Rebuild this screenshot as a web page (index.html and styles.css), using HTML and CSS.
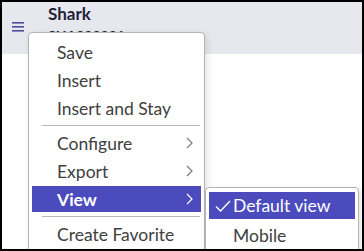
FILE: index.html
```html
<!DOCTYPE html>
<html lang="en">
<head>
    <meta charset="UTF-8">
    <title>Shark - Menu</title>
    <link rel="stylesheet" href="styles.css">
</head>
<body>
    <div class="frame">
        <div class="header">
            <svg class="burger" width="12" height="10" viewBox="0 0 12 10">
                <rect x="0" y="0" width="12" height="1.6" fill="#4d4d9e"/>
                <rect x="0" y="4" width="12" height="1.6" fill="#4d4d9e"/>
                <rect x="0" y="8" width="12" height="1.6" fill="#4d4d9e"/>
            </svg>
            <div class="title">
                <div class="name">Shark</div>
                <div class="code">SHA000001</div>
            </div>
        </div>

        <!-- context menu -->
        <div class="menu">
            <div class="item">Save</div>
            <div class="item">Insert</div>
            <div class="item">Insert and Stay</div>
            <div class="sep"></div>
            <div class="item">Configure <svg class="chev" width="7" height="12" viewBox="0 0 7 12"><polyline points="1,1 6,6 1,11" fill="none" stroke="currentColor" stroke-width="1.2"/></svg></div>
            <div class="item">Export <svg class="chev" width="7" height="12" viewBox="0 0 7 12"><polyline points="1,1 6,6 1,11" fill="none" stroke="currentColor" stroke-width="1.2"/></svg></div>
            <div class="item active">View <svg class="chev" width="7" height="12" viewBox="0 0 7 12"><polyline points="1,1 6,6 1,11" fill="none" stroke="currentColor" stroke-width="1.2"/></svg></div>
            <div class="sep"></div>
            <div class="item">Create Favorite</div>
        </div>

        <!-- sub menu for View -->
        <div class="submenu">
            <div class="sub-item active">
                <svg class="check" width="16" height="12" viewBox="0 0 16 12"><polyline points="1,6.5 5.5,11 15,1" fill="none" stroke="currentColor" stroke-width="1.4"/></svg>
                Default view
            </div>
            <div class="sub-item">Mobile</div>
        </div>
    </div>
</body>
</html>
```

FILE: styles.css
```css
body {
    margin: 0;
    font-family: Lato, "Liberation Sans", sans-serif;
    background: #fff;
}
.frame {
    position: relative;
    width: 360px;
    height: 247px;
    border: 2px solid #000;
    overflow: hidden;
    background: #fff;
}
.header {
    height: 52px;
    background: #e7e8ed;
    display: flex;
    align-items: flex-start;
}
.burger {
    margin: 20px 0 0 10px;
}
.title {
    margin: 2px 0 0 24px;
    color: #22223a;
}
.name {
    font-weight: bold;
    font-size: 17px;
    line-height: 20px;
}
.code {
    margin-top: 4px;
    font-weight: bold;
    font-size: 14px;
    line-height: 16px;
}
.menu {
    position: absolute;
    left: 26px;
    top: 30px;
    width: 175px;
    height: 240px;
    padding-top: 6px;
    display: flex;
    flex-direction: column;
    background: #fff;
    border: 1px solid #b4b4b8;
    border-radius: 4px;
    box-shadow: 2px 2px 6px rgba(0, 0, 0, 0.12);
}
.item {
    height: 26px;
    flex: none;
    margin: 0 3px 2px 3px;
    padding: 0 8px 0 25px;
    display: flex;
    align-items: center;
    justify-content: space-between;
    font-size: 17.5px;
    color: #404040;
}
.chev {
    color: #7a7a7a;
}
.item.active {
    background: #4b4bbe;
    color: #fff;
    font-weight: bold;
}
.item.active .chev {
    color: #fff;
}
.sep {
    height: 1px;
    flex: none;
    margin: 2px 4px 4px 13px;
    background: #b8b8b8;
}
.submenu {
    position: absolute;
    left: 203px;
    top: 185px;
    width: 152px;
    height: 80px;
    padding-top: 4px;
    display: flex;
    flex-direction: column;
    background: #fff;
    border: 1px solid #b4b4b8;
    border-radius: 4px;
    box-shadow: 2px 2px 6px rgba(0, 0, 0, 0.12);
}
.sub-item {
    height: 27px;
    flex: none;
    margin: 0 3px 3px 3px;
    padding-left: 24px;
    display: flex;
    align-items: center;
    font-size: 17.5px;
    color: #404040;
    position: relative;
}
.sub-item.active {
    background: #4b4bbe;
    color: #fff;
}
.check {
    position: absolute;
    left: 6px;
    top: 8px;
}
```
